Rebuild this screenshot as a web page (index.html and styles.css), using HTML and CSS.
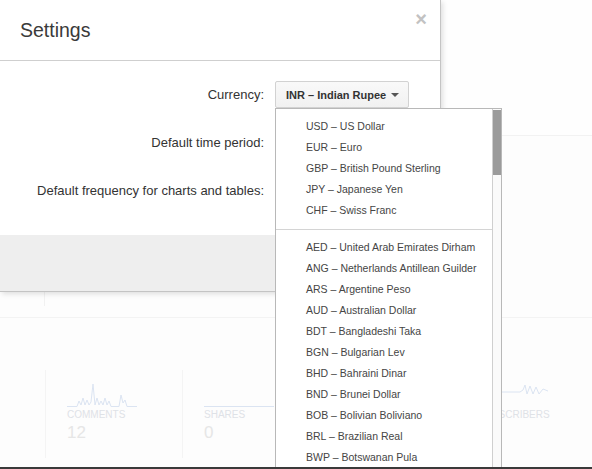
FILE: index.html
```html
<!DOCTYPE html>
<html lang="en">
<head>
<meta charset="utf-8">
<title>Settings</title>
<link rel="stylesheet" href="styles.css">
</head>
<body>
<div class="page">
  <div class="dash">
    <div class="dash-top"></div>
    <div class="dash-mid"><div class="dash-mid-cell"></div></div>
    <div class="cards">
      <div class="card">
        <svg class="spark" width="70" height="25" viewBox="0 0 70 25"><polyline fill="none" stroke="#dbe4f2" stroke-width="1" points="0,22.5 10,22.5 12,17 14,21 16,14 18,21 20,16 22,21 24,18 26,0 28,21 30,14 32,21 34,17 36,21 38,14 40,21 42,17 44,22.5 52,22.5 54,11 56,19 58,16 60,22.5 70,22.5"/></svg>
        <div class="card-label">COMMENTS</div>
        <div class="card-value">12</div>
      </div>
      <div class="card">
        <svg class="spark" width="70" height="25" viewBox="0 0 70 25"><polyline fill="none" stroke="#dbe4f2" stroke-width="1" points="0,22.5 70,22.5"/></svg>
        <div class="card-label">SHARES</div>
        <div class="card-value">0</div>
      </div>
      <div class="card"></div>
      <div class="card">
        <svg class="spark" width="70" height="25" viewBox="0 0 70 25"><polyline fill="none" stroke="#dbe4f2" stroke-width="1" points="0,8 42,8 45,6 47,1 49,10 52,2 55,10 58,3 61,10 65,5 70,7"/></svg>
        <div class="card-label">SUBSCRIBERS</div>
        <div class="card-value">0</div>
      </div>
    </div>
  </div>

  <div class="modal">
    <div class="modal-header">
      <h1 class="modal-title">Settings</h1>
      <span class="close">&times;</span>
    </div>
    <div class="modal-body">
      <div class="row">
        <label class="row-label">Currency:</label>
        <div class="row-control">
          <button class="select-btn"><span>INR &ndash; Indian Rupee</span><span class="caret"></span></button>
        </div>
      </div>
      <div class="row">
        <label class="row-label">Default time period:</label>
        <div class="row-control"></div>
      </div>
      <div class="row">
        <label class="row-label">Default frequency for charts and tables:</label>
        <div class="row-control"></div>
      </div>
    </div>
    <div class="modal-footer"></div>
  </div>

  <div class="dropdown">
    <ul class="dd-list">
      <li>USD &ndash; US Dollar</li>
      <li>EUR &ndash; Euro</li>
      <li>GBP &ndash; British Pound Sterling</li>
      <li>JPY &ndash; Japanese Yen</li>
      <li>CHF &ndash; Swiss Franc</li>
      <li class="sep"></li>
      <li>AED &ndash; United Arab Emirates Dirham</li>
      <li>ANG &ndash; Netherlands Antillean Guilder</li>
      <li>ARS &ndash; Argentine Peso</li>
      <li>AUD &ndash; Australian Dollar</li>
      <li>BDT &ndash; Bangladeshi Taka</li>
      <li>BGN &ndash; Bulgarian Lev</li>
      <li>BHD &ndash; Bahraini Dinar</li>
      <li>BND &ndash; Brunei Dollar</li>
      <li>BOB &ndash; Bolivian Boliviano</li>
      <li>BRL &ndash; Brazilian Real</li>
      <li>BWP &ndash; Botswanan Pula</li>
    </ul>
    <div class="dd-scroll"><div class="dd-thumb"></div></div>
  </div>
</div>
</body>
</html>
```

FILE: styles.css
```css
html, body {
  margin: 0;
  padding: 0;
}
body {
  font-family: "Liberation Sans", Arial, sans-serif;
  background: #fdfdfd;
}
.page {
  position: relative;
  width: 592px;
  height: 467px;
  border-bottom: 2px solid #3a3a3a;
  overflow: hidden;
  background: #fdfdfd;
}

/* faint dashboard behind the backdrop */
.dash {
  display: flex;
  flex-direction: column;
}
.dash-top {
  height: 135px;
  background: #fefefe;
  border-bottom: 1px solid #f2f2f2;
}
.dash-mid {
  height: 181px;
  border-bottom: 1px solid #f3f3f3;
  display: flex;
}
.dash-mid-cell {
  width: 44px;
  height: 170px;
  border-right: 1px solid #f1f1f1;
}
.cards {
  display: flex;
  padding: 52px 0 0 45px;
}
.card {
  flex: none;
  width: 137px;
  height: 88px;
  box-sizing: border-box;
  border-left: 1px solid #f4f4f4;
  padding: 14px 0 0 21px;
}
.spark {
  display: block;
}
.card-label {
  font-size: 10px;
  line-height: 12px;
  color: #dfe2e7;
}
.card-value {
  font-size: 17px;
  line-height: 20px;
  margin-top: 2px;
  color: #e6e6e6;
}

/* modal */
.modal {
  position: absolute;
  left: 0;
  top: 0;
  width: 441px;
  box-sizing: border-box;
  background: #fff;
  border-right: 1px solid #c4c4c4;
  border-bottom: 1px solid #c4c4c4;
  box-shadow: 2px 2px 5px rgba(0, 0, 0, 0.12);
}
.modal-header {
  height: 61px;
  box-sizing: border-box;
  border-bottom: 1px solid #cfcfcf;
  display: flex;
  align-items: center;
  justify-content: space-between;
  padding: 0 13px 0 20px;
}
.modal-title {
  margin: 0;
  font-size: 19.5px;
  font-weight: normal;
  color: #3a3a3a;
}
.close {
  align-self: flex-start;
  margin-top: 9px;
  font-size: 20px;
  line-height: 20px;
  font-weight: bold;
  color: #c2c2c2;
}
.modal-body {
  display: flex;
  flex-direction: column;
  gap: 21px;
  padding: 20px 0 31px;
}
.row {
  display: grid;
  grid-template-columns: 264px 1fr;
  column-gap: 11px;
  align-items: center;
  height: 27px;
}
.row-label {
  text-align: right;
  font-size: 13px;
  color: #333;
}
.select-btn {
  display: flex;
  align-items: center;
  justify-content: space-between;
  width: 134px;
  height: 27px;
  box-sizing: border-box;
  padding: 0 9px 0 10px;
  border: 1px solid #d2d2d2;
  border-radius: 2px;
  background: linear-gradient(#f9f9f9, #f1f1f1);
  font-family: "Liberation Sans", Arial, sans-serif;
  font-size: 11px;
  font-weight: bold;
  color: #333;
}
.caret {
  width: 0;
  height: 0;
  border-left: 4px solid transparent;
  border-right: 4px solid transparent;
  border-top: 4px solid #555;
}
.modal-footer {
  height: 56px;
  background: #eeeeee;
}

/* dropdown menu */
.dropdown {
  position: absolute;
  left: 275px;
  top: 108px;
  width: 227px;
  height: 380px;
  box-sizing: border-box;
  border: 1px solid #b8b8b8;
  background: #fff;
  display: flex;
}
.dd-list {
  flex: 1;
  list-style: none;
  margin: 0;
  padding: 7px 0 0;
}
.dd-list li {
  height: 21px;
  line-height: 21px;
  padding-left: 30px;
  font-size: 10.5px;
  color: #454545;
  white-space: nowrap;
}
.dd-list li.sep {
  height: 0;
  padding: 0;
  margin: 8px 0 7px;
  border-top: 1px solid #d4d4d4;
}
.dd-scroll {
  width: 9px;
  box-sizing: border-box;
  border-left: 1px solid #cfcfcf;
  background: #fafafa;
}
.dd-thumb {
  margin-top: 1px;
  height: 65px;
  background: #9b9b9b;
}
```
